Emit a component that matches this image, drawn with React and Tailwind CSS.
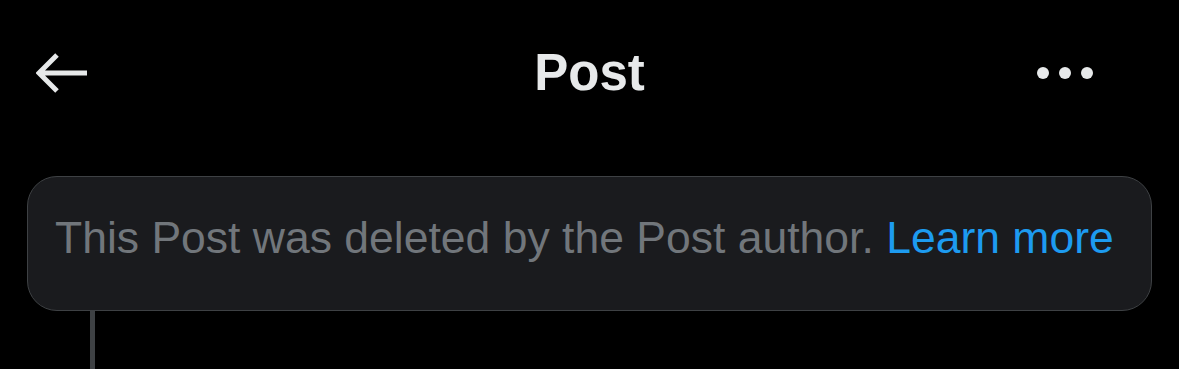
export default function App() {
  return (
    <div
      className="w-[1179px] h-[369px] bg-black overflow-hidden"
      style={{ fontFamily: '"Liberation Sans", Arial, sans-serif' }}
    >
      <header className="h-[146px] grid grid-cols-[1fr_auto_1fr] items-start pt-[44px] pl-[36px] pr-[86px]">
        <button className="w-[52px] h-[58px] flex items-center">
          <svg width="52" height="44" viewBox="0 0 52 44" fill="none">
            <path d="M51 22H4M21 4L3 22l18 18" stroke="#e7e9ea" strokeWidth="5" strokeLinecap="butt" strokeLinejoin="miter" />
          </svg>
        </button>
        <h2 className="text-[51px] leading-[58px] font-bold text-[#e7e9ea] translate-x-[25px]">Post</h2>
        <div className="h-[58px] flex items-center justify-end gap-[10px]">
          <span className="w-[12px] h-[12px] rounded-full bg-[#e7e9ea] shrink-0" />
          <span className="w-[12px] h-[12px] rounded-full bg-[#e7e9ea] shrink-0" />
          <span className="w-[12px] h-[12px] rounded-full bg-[#e7e9ea] shrink-0" />
        </div>
      </header>
      <div className="px-[27px] pt-[30px]">
        <div className="h-[135px] rounded-[30px] border border-[#3e4144] bg-[#1a1b1e] flex items-center pl-[27px] pb-[10px]">
          <p className="text-[44.5px] text-[#71767b] whitespace-nowrap">
            This Post was deleted by the Post author.{" "}
            <a className="text-[#1d9bf0]">Learn more</a>
          </p>
        </div>
        <div className="ml-[63px] w-[5px] h-[60px] bg-[#3e4144]" />
      </div>
    </div>
  );
}
